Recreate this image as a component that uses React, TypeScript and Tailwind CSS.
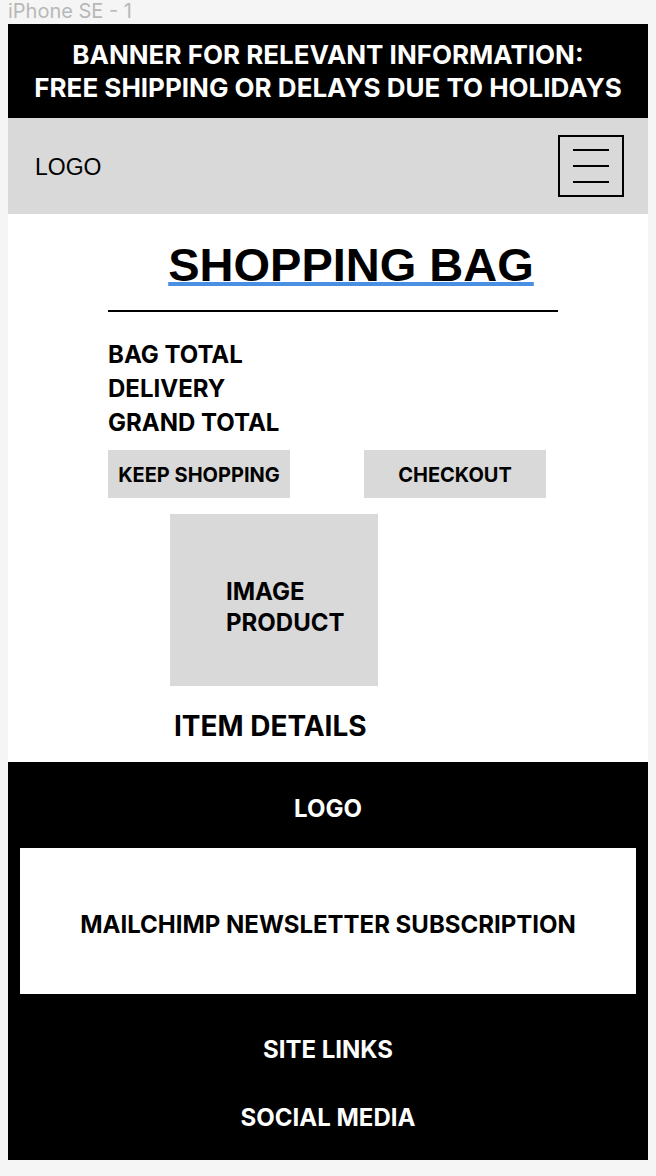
export default function App() {
  const inter = { fontFamily: "Inter, 'Noto Sans', sans-serif" };
  return (
    <div className="min-h-[1176px] w-[656px] overflow-hidden bg-[#f5f5f5]" style={inter}>
      <div className="h-[24px] pl-[8px]">
        <div className="text-[20px] leading-[23px] text-[#b8b8b8]">iPhone SE - 1</div>
      </div>
      <div className="mx-[8px] w-[640px]">
        <div className="flex h-[94px] flex-col items-center justify-center bg-black text-center text-[26px] font-bold leading-[33px] text-white">
          <div>BANNER FOR RELEVANT INFORMATION:</div>
          <div>FREE SHIPPING OR DELAYS DUE TO HOLIDAYS</div>
        </div>
        <div className="flex h-[96px] items-center justify-between bg-[#d9d9d9] pl-[27px] pr-[24px]">
          <span className="pt-[2px] text-[23px] text-black" style={{ fontFamily: "'Liberation Sans', Arial, sans-serif" }}>LOGO</span>
          <div className="flex h-[62px] w-[66px] flex-col items-center justify-center gap-[14px] border-2 border-black">
            <div className="h-[2px] w-[36px] bg-black" />
            <div className="h-[2px] w-[36px] bg-black" />
            <div className="h-[2px] w-[36px] bg-black" />
          </div>
        </div>
        <div className="flex h-[548px] flex-col bg-white">
          <div className="flex justify-center pt-[24px] pl-[46px]">
            <h1
              className="text-[47px] font-bold leading-[54px] text-black underline decoration-[#4a90e2] decoration-[4px] underline-offset-[1px]"
              style={{ fontFamily: "'Liberation Sans', Arial, sans-serif" }}
            >
              SHOPPING BAG
            </h1>
          </div>
          <div className="ml-[100px] mt-[18px] h-[2px] w-[450px] bg-black" />
          <div className="ml-[100px] mt-[26px] flex flex-col text-[24px] font-bold leading-[34px] text-black">
            <div>BAG TOTAL</div>
            <div>DELIVERY</div>
            <div>GRAND TOTAL</div>
          </div>
          <div className="ml-[100px] mt-[10px] flex gap-[74px]">
            <div className="flex h-[48px] w-[182px] items-center justify-center bg-[#d9d9d9] pt-[2px] text-[20px] font-bold text-black">KEEP SHOPPING</div>
            <div className="flex h-[48px] w-[182px] items-center justify-center bg-[#d9d9d9] pt-[2px] text-[20px] font-bold text-black">CHECKOUT</div>
          </div>
          <div className="ml-[162px] mt-[16px] flex h-[172px] w-[208px] flex-col justify-center bg-[#d9d9d9] pl-[56px] pt-[13px] text-[24px] font-bold leading-[31px] text-black">
            <div>IMAGE</div>
            <div>PRODUCT</div>
          </div>
          <div className="ml-[166px] mt-[23px] text-[28px] font-bold leading-[34px] text-black">ITEM DETAILS</div>
        </div>
        <div className="flex h-[398px] flex-col bg-black">
          <div className="flex h-[86px] items-center justify-center pt-[8px] text-[24px] font-bold text-white">LOGO</div>
          <div className="mx-[12px] flex h-[146px] items-center justify-center bg-white pt-[8px] text-[24px] font-bold text-black">
            MAILCHIMP NEWSLETTER SUBSCRIPTION
          </div>
          <div className="mt-[39px] text-center text-[24px] font-bold leading-[34px] text-white">SITE LINKS</div>
          <div className="mt-[34px] text-center text-[24px] font-bold leading-[34px] text-white">SOCIAL MEDIA</div>
        </div>
      </div>
    </div>
  );
}
